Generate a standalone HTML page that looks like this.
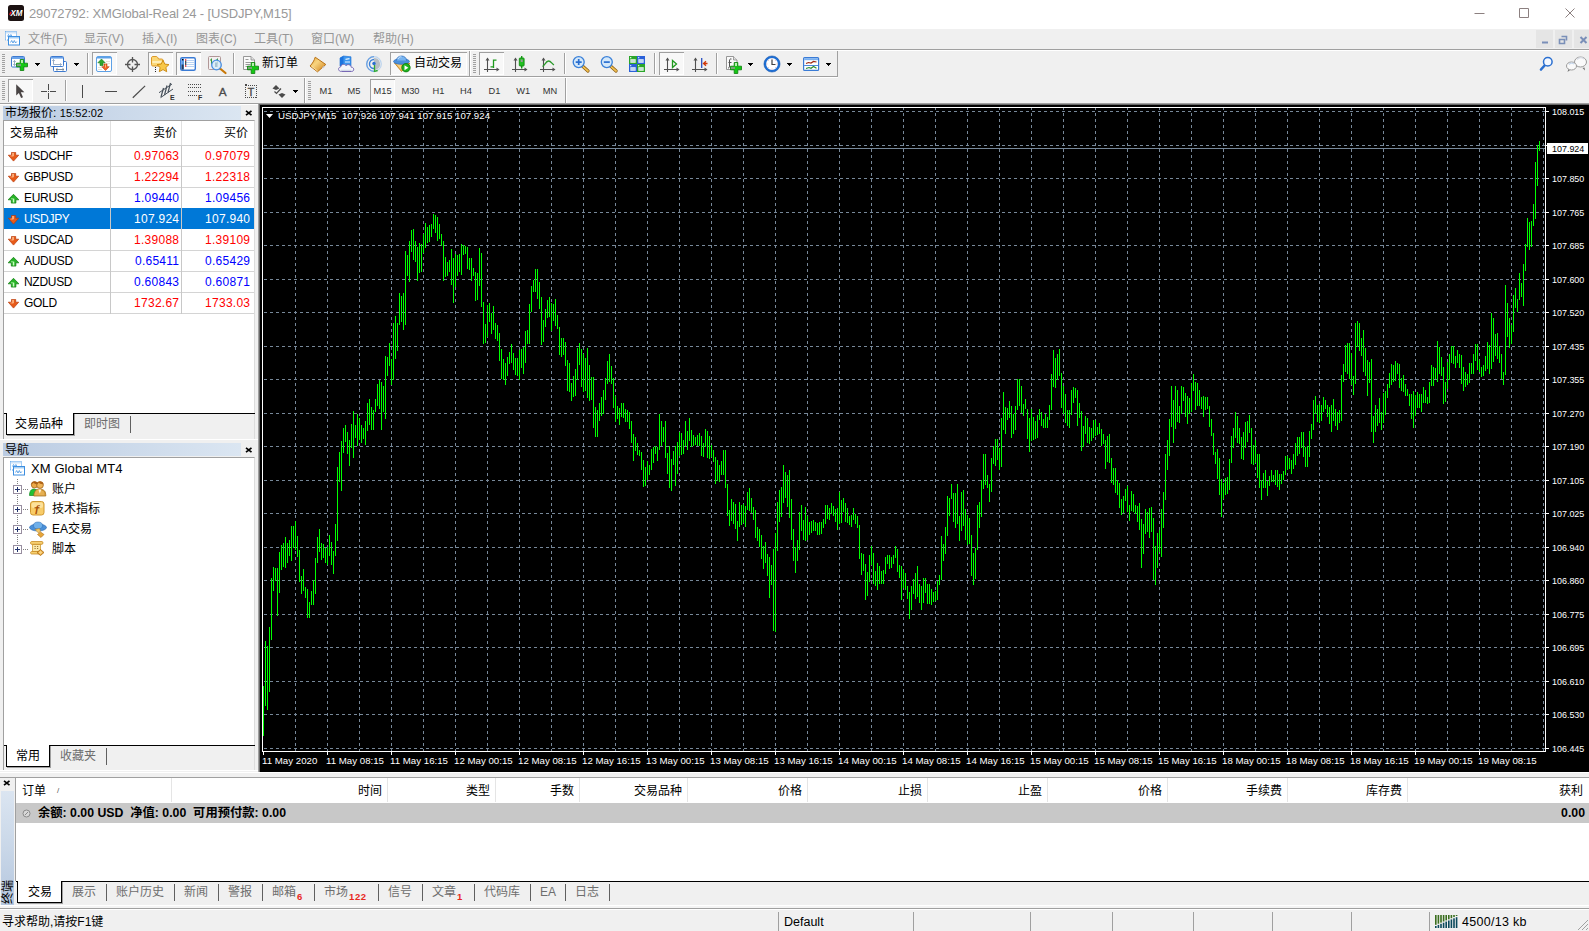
<!DOCTYPE html>
<html lang="zh-CN"><head><meta charset="utf-8"><title>29072792: XMGlobal-Real 24 - [USDJPY,M15]</title>
<style>

html,body{margin:0;padding:0}
body{width:1589px;height:931px;overflow:hidden;background:#f0f0f0;font-family:"Liberation Sans","Noto Sans CJK SC",sans-serif;font-size:12px;color:#000}
#app{position:relative;width:1589px;height:931px;overflow:hidden;background:#f0f0f0}
#app div,#app span,#app svg{position:absolute;box-sizing:border-box}
.t{white-space:pre;line-height:16px;height:16px}
.r{text-align:right}
.tb{background:#f0f0f0}
.pressed{background:#f7f7f7;border:1px solid #fff;border-top-color:#a0a0a0;border-left-color:#a0a0a0}
.vsep{width:2px;border-left:1px solid #a0a0a0;border-right:1px solid #fff}
.grip{width:3px;background:repeating-linear-gradient(to bottom,#a0a0a0 0,#a0a0a0 1px,transparent 1px,transparent 2px)}
.hdr{background:linear-gradient(to right,#bacbe2 0,#cbd9ea 50%,#dbe6f2 100%)}
.gl{background:#a0a0a0}
.red{color:#ff0000}.blue{color:#0000ff}.wh{color:#fff}
.mw .t{font-size:12px}
.tabtxt{color:#6d6d6d}

</style></head>
<body>
<div id="app">
<div style="left:0px;top:0px;width:1589px;height:29px;background:#fff"></div>
<svg style="left:8px;top:5px" width="16" height="16" viewBox="0 0 16 16" ><rect x="0" y="0" width="16" height="16" rx="2.500" fill="#1c1212"/><text x="8.400" y="11.100" font-family="Liberation Sans, sans-serif" font-size="8.600" font-weight="bold" font-style="italic" fill="#fff" text-anchor="middle" textLength="12" lengthAdjust="spacingAndGlyphs">XM</text><path d="M1.700 9.800l1.500-3" stroke="#f0141e" stroke-width="1.500"/></svg>
<span class="t " style="left:29px;top:5px;font-size:13px;letter-spacing:-.15px;color:#999;line-height:18px;height:18px">29072792: XMGlobal-Real 24 - [USDJPY,M15]</span>
<svg style="left:1469px;top:3px" width="115" height="22" viewBox="0 0 115 22" ><path d="M5.5 10.5h10M50.5 5.5h9v9h-9zM96.5 5.5l9 9M105.5 5.5l-9 9" stroke="#8c8080" stroke-width="1" fill="none"/></svg>
<div style="left:0px;top:29px;width:1589px;height:20px;background:#f0f0f0"></div>
<svg style="left:5px;top:31px" width="15" height="15" viewBox="0 0 15 15" ><rect x="0.500" y="0.500" width="11" height="8.500" fill="#fff" stroke="#4a9ae8" stroke-dasharray="1 1"/><rect x="1" y="1" width="10" height="1.500" fill="#cfe4f8"/><rect x="3.500" y="5.500" width="11" height="8.500" fill="#fff" stroke="#3c8ee0"/><rect x="4" y="6" width="10" height="1.500" fill="#a8d0f4"/><path d="M2.500 5.500l1-2 1.200 2 1.200-2 1.200 2" stroke="#4a9ae8" stroke-width=".8" fill="none"/><path d="M5.500 11.500l1.200-2 1.300 2.500 1.300-2.500 1.300 2.500 1.200-1.500" stroke="#3c8ee0" stroke-width=".8" fill="none"/></svg>
<span class="t " style="left:28px;top:31px;color:#969696;font-size:12px">文件(F)</span>
<span class="t " style="left:84px;top:31px;color:#969696;font-size:12px">显示(V)</span>
<span class="t " style="left:142px;top:31px;color:#969696;font-size:12px">插入(I)</span>
<span class="t " style="left:196px;top:31px;color:#969696;font-size:12px">图表(C)</span>
<span class="t " style="left:254px;top:31px;color:#969696;font-size:12px">工具(T)</span>
<span class="t " style="left:311px;top:31px;color:#969696;font-size:12px">窗口(W)</span>
<span class="t " style="left:373px;top:31px;color:#969696;font-size:12px">帮助(H)</span>
<div style="left:1536px;top:30px;width:17px;height:18px;background:#e5e5e5"></div>
<div style="left:1555px;top:30px;width:17px;height:18px;background:#e5e5e5"></div>
<div style="left:1574px;top:30px;width:15px;height:18px;background:#e5e5e5"></div>
<svg style="left:1536px;top:30px" width="53" height="18" viewBox="0 0 53 18" ><path d="M6 12.5h6" stroke="#7a8fb8" stroke-width="2" fill="none"/><path d="M25.5 6.5h5v4M23.5 9.5h5v4h-5z" stroke="#7a8fb8" stroke-width="1.6" fill="none"/><path d="M44.500 7l6 6M50.500 7l-6 6" stroke="#7a8fb8" stroke-width="2" fill="none"/></svg>
<div style="left:0px;top:49px;width:1589px;height:1px;background:#a0a0a0"></div>
<div style="left:0px;top:50px;width:1589px;height:1px;background:#fff"></div>
<div style="left:0px;top:103px;width:1589px;height:1px;background:#a0a0a0"></div>
<div style="left:0px;top:104px;width:258px;height:1px;background:#fff"></div>
<svg style="left:0;top:51px" width="840" height="27" viewBox="0 51 840 27" shape-rendering="crispEdges"><path d="M0 76.500H838" stroke="#a0a0a0"/><path d="M0 77.500H838" stroke="#fff"/><path d="M837.500 51V77" stroke="#a0a0a0"/><rect x="2" y="54" width="3" height="1" fill="#a0a0a0"/><rect x="2" y="56" width="3" height="1" fill="#a0a0a0"/><rect x="2" y="58" width="3" height="1" fill="#a0a0a0"/><rect x="2" y="60" width="3" height="1" fill="#a0a0a0"/><rect x="2" y="62" width="3" height="1" fill="#a0a0a0"/><rect x="2" y="64" width="3" height="1" fill="#a0a0a0"/><rect x="2" y="66" width="3" height="1" fill="#a0a0a0"/><rect x="2" y="68" width="3" height="1" fill="#a0a0a0"/><rect x="2" y="70" width="3" height="1" fill="#a0a0a0"/><rect x="2" y="72" width="3" height="1" fill="#a0a0a0"/><g shape-rendering="auto"><rect x="11.500" y="56.500" width="13" height="10.500" rx="1" fill="#fff" stroke="#3d7ad0"/><rect x="12" y="57" width="12" height="2" fill="#6aa3ea"/><path d="M14.500 60.500v5M13.300 62l1.200-1.500 1.200 1.500M13.300 64l1.200 1.500 1.200-1.500" stroke="#8fa5c0" stroke-width=".9" fill="none"/></g><g shape-rendering="auto"><path d="M20.2 59.5h3.600v3.700h3.700v3.600h-3.700v3.700h-3.600v-3.700h-3.700v-3.600h3.700z" fill="#14c814" stroke="#0b7d0b" stroke-width=".8"/><rect x="21" y="60" width="2" height="3" fill="#b8f0b0"/><rect x="17" y="64" width="4" height="2" fill="#7aa07a"/></g><rect x="35" y="63" width="5" height="1" fill="#000"/><rect x="36" y="64" width="3" height="1" fill="#000"/><rect x="37" y="65" width="1" height="1" fill="#000"/><g shape-rendering="auto"><rect x="53.500" y="61.500" width="13" height="10" rx="1" fill="#fff" stroke="#3d7ad0"/><rect x="50.500" y="56.500" width="13" height="10" rx="1" fill="#fff" stroke="#3d7ad0"/><rect x="51" y="57" width="12" height="1.600" fill="#6aa3ea"/><path d="M53.500 59.500v5M52.300 61l1.200-1.500 1.200 1.500M53.500 64.500h8M60 63.300l1.500 1.200-1.500 1.200" stroke="#8fa5c0" stroke-width=".9" fill="none"/><path d="M56 69.500h8M57.500 68.300l-1.500 1.200 1.500 1.200M62.500 68.300l1.500 1.200-1.500 1.200" stroke="#708090" stroke-width=".9" fill="none"/></g><rect x="74" y="63" width="5" height="1" fill="#000"/><rect x="75" y="64" width="3" height="1" fill="#000"/><rect x="76" y="65" width="1" height="1" fill="#000"/><path d="M87.5 53V74" stroke="#a0a0a0"/><path d="M88.5 53V74" stroke="#fff"/><rect x="92" y="52" width="25" height="23" fill="#f8f8f8"/><path d="M92.5 75V52.5H117" stroke="#a0a0a0" fill="none"/><path d="M93 74.5H116.5V53" stroke="#fff" fill="none"/><g shape-rendering="auto"><rect x="96.500" y="56.500" width="15" height="15" rx="1.500" fill="#fff" stroke="#5ea1e6"/><rect x="97" y="57" width="14" height="1.500" fill="#5ea1e6"/><path d="M106 61.500h4M106 63.500h4M98 67.500h4M98 69.500h4" stroke="#e8e4d8" stroke-width="1"/><path d="M101.500 59l3.700 3.800h-2.200v2.700h-3v-2.700h-2.200z" fill="#2fa82f" stroke="#1a7a1a" stroke-width=".6"/><path d="M105.500 70.500l3.700-3.800h-2.200v-2.700h-3v2.700h-2.200z" fill="#f06428" stroke="#c03c08" stroke-width=".6"/><rect x="105" y="64.500" width="1" height="3" fill="#f8c070"/></g><g shape-rendering="auto" stroke="#555" fill="none"><circle cx="132.500" cy="64.500" r="5" stroke-width="1.300"/><path d="M132.500 57v5.500M132.500 66.500V72M125 64.500h5.500M134.500 64.500H140" stroke-width="1.300"/></g><rect x="148" y="52" width="25" height="23" fill="#f8f8f8"/><path d="M148.5 75V52.5H173" stroke="#a0a0a0" fill="none"/><path d="M149 74.5H172.5V53" stroke="#fff" fill="none"/><g shape-rendering="auto"><path d="M151.500 58c0-1 .5-1.500 1.500-1.500h3c1 0 1.500.5 2 1.500l.5 1h3c1 0 1.500.5 1.500 1.500v4c0 1-.5 1.500-1.500 1.500h-8.500c-1 0-1.500-.5-1.500-1.500z" fill="#fbd878" stroke="#d89018" stroke-width=".9"/><path d="M152.300 61h9.500v2h-9.500z" fill="#fff3c8" opacity=".8"/><path d="M163 60.200l1.800 3.900 4.200.5-3.100 2.900.8 4.200-3.700-2.100-3.700 2.100.8-4.200-3.100-2.900 4.200-.5z" fill="#f8c848" stroke="#c8860c" stroke-width=".9"/><path d="M155.500 67v1M155.500 69v1M155.500 71v1" stroke="#222" stroke-width="1"/></g><rect x="176" y="52" width="25" height="23" fill="#f8f8f8"/><path d="M176.5 75V52.5H201" stroke="#a0a0a0" fill="none"/><path d="M177 74.5H200.5V53" stroke="#fff" fill="none"/><g shape-rendering="auto"><rect x="180.700" y="57.700" width="14.600" height="12.600" rx="1.500" fill="#fff" stroke="#3a7bd5" stroke-width="1.400"/><rect x="181.400" y="58.400" width="2.600" height="11.200" fill="#5b9be8"/><rect x="181.600" y="64.500" width="2" height="5" fill="#283c5a"/><path d="M185 60.500h9.500M185 62.500h9.500M185 64.500h9.500M185 66.500h9.500" stroke="#a8c8f0" stroke-width=".8"/><rect x="182" y="59" width="1.400" height="1.400" fill="#000"/><rect x="185" y="59.300" width="1.300" height="1.300" fill="#e00"/><rect x="185" y="61.300" width="1.300" height="1.300" fill="#000"/><rect x="185" y="63.300" width="1.300" height="1.300" fill="#000"/><rect x="185" y="65.300" width="1.300" height="1.300" fill="#e00"/></g><g shape-rendering="auto"><rect x="208.500" y="56.500" width="12" height="13" rx="1" fill="#f4f0f0" stroke="#a88c8c" stroke-width=".9"/><path d="M211.500 58.500v6M210 60h1.500M211.500 63h1.500M217.500 58.500v5M216 60h1.500" stroke="#3c9a3c" stroke-width="1"/><path d="M220 68.500l5.500 4.500" stroke="#c87808" stroke-width="2.200" stroke-linecap="round"/><circle cx="216.500" cy="65" r="4.800" fill="#d8ecfa" fill-opacity=".85" stroke="#4a90e2" stroke-width="1.300"/><rect x="215" y="62.500" width="2.500" height="4.500" fill="#9ab8c8" opacity=".8"/></g><path d="M233.5 53V74" stroke="#a0a0a0"/><path d="M234.5 53V74" stroke="#fff"/><g shape-rendering="auto"><path d="M243.500 56.500h7.500l3.500 3.500v9.500h-11z" fill="#fafafa" stroke="#8c8c8c" stroke-width=".9"/><path d="M251 56.500v3.500h3.500" fill="#e0e0e0" stroke="#8c8c8c" stroke-width=".8"/><path d="M245.500 59.500h3M245.500 62.500h6M245.500 64.500h5M245.500 66.500h3" stroke="#9a9a9a" stroke-width="1"/></g><g shape-rendering="auto"><path d="M251.2 62.5h3.600v3.700h3.700v3.600h-3.700v3.700h-3.600v-3.700h-3.700v-3.600h3.700z" fill="#14c814" stroke="#0b7d0b" stroke-width=".8"/><rect x="252" y="63" width="2" height="3" fill="#b8f0b0"/><rect x="248" y="67" width="4" height="2" fill="#7aa07a"/></g><g shape-rendering="auto"><defs><linearGradient id="gb" x1="0" y1="0" x2="1" y2="1"><stop offset="0" stop-color="#e8a838"/><stop offset=".4" stop-color="#f8d480"/><stop offset="1" stop-color="#cc7c14"/></linearGradient></defs><path d="M315.200 57.200L325.800 64.500L317.500 71.800L310 66c2.500-2.500 4.200-5.500 5.200-8.800z" fill="url(#gb)" stroke="#b87014" stroke-width="1"/><path d="M311.500 66.300l6 4.600" stroke="#fff0c0" stroke-width=".9" opacity=".8"/><path d="M324.500 66.200l-2 1.800" stroke="#c8c8d0" stroke-width="1.300"/></g><g shape-rendering="auto"><path d="M340 58l3.500-2 7.500 .8v9.200h-11z" fill="#3c96ee" stroke="#1a6cd0" stroke-width=".6"/><path d="M340 58l3.500-2v10h-3.500z" fill="#1c74de"/><path d="M345.500 59.300l4-.6M345 62h5" stroke="#e4f2ff" stroke-width="1.200"/><path d="M341.500 71.500c-3.500 0-4-4-.8-4.600 .3-2.800 4-3.400 5.300-1.200 1.500-1.900 5-1.200 5.200 1.500 3-.3 3.600 4.300 .3 4.300z" fill="#f4f6fa" stroke="#7868b4" stroke-width="1"/><path d="M341 70.300h10.500" stroke="#c8d0e0" stroke-width="1"/></g><g shape-rendering="auto" fill="none"><circle cx="374" cy="64" r="7.300" stroke="#bcd4ee" stroke-width="1.200"/><path d="M374 56.700a7.300 7.300 0 0 0 0 14.600" stroke="#6aa0e0" stroke-width="1.300"/><path d="M374 59.500a4.500 4.500 0 0 0 0 9" stroke="#3a80d8" stroke-width="1.400"/><path d="M374 58a6 6 0 0 1 3 11.200l-3 1.300z" fill="#b0b8c0" stroke="none" opacity=".9"/><circle cx="374" cy="63.500" r="1.700" fill="#2a6fd0" stroke="none"/><path d="M374.500 65v6.300l3.200-.8" stroke="#2faa2f" stroke-width="1.300"/></g><rect x="390" y="52" width="77" height="23" fill="#f8f8f8"/><path d="M390.5 75V52.5H467" stroke="#a0a0a0" fill="none"/><path d="M391 74.5H466.5V53" stroke="#fff" fill="none"/><g shape-rendering="auto"><path d="M394.500 63l7 8.500 8.500-8z" fill="#f0b450" stroke="#c07c14" stroke-width=".8"/><path d="M396 63.500l5.500 6.500-1-6.500z" fill="#f8d890" opacity=".8"/><ellipse cx="401.500" cy="61.500" rx="8" ry="2.800" fill="#4a90dc" stroke="#2868b8" stroke-width=".7"/><path d="M396.500 60.500c0-6 10-6 10 0" fill="#78b4f0" stroke="#2868b8" stroke-width=".7"/><path d="M398 59c1-2.500 3-2.500 3.500-2" stroke="#cfe6ff" stroke-width="1" fill="none"/><circle cx="406" cy="67.700" r="4.200" fill="#1eb41e" stroke="#0e7a0e" stroke-width=".8"/><path d="M404.500 65.200l3.800 2.500-3.800 2.500z" fill="#fff"/></g><path d="M469.5 51V76" stroke="#a0a0a0"/><path d="M470.5 51V76" stroke="#fff"/><rect x="473" y="54" width="3" height="1" fill="#a0a0a0"/><rect x="473" y="56" width="3" height="1" fill="#a0a0a0"/><rect x="473" y="58" width="3" height="1" fill="#a0a0a0"/><rect x="473" y="60" width="3" height="1" fill="#a0a0a0"/><rect x="473" y="62" width="3" height="1" fill="#a0a0a0"/><rect x="473" y="64" width="3" height="1" fill="#a0a0a0"/><rect x="473" y="66" width="3" height="1" fill="#a0a0a0"/><rect x="473" y="68" width="3" height="1" fill="#a0a0a0"/><rect x="473" y="70" width="3" height="1" fill="#a0a0a0"/><rect x="473" y="72" width="3" height="1" fill="#a0a0a0"/><rect x="479" y="52" width="25" height="23" fill="#f8f8f8"/><path d="M479.5 75V52.5H504" stroke="#a0a0a0" fill="none"/><path d="M480 74.5H503.5V53" stroke="#fff" fill="none"/><g shape-rendering="auto" stroke="#505050" stroke-width="1.100" fill="none"><path d="M487.5 58.500V72M484 69.500H498"/></g><path d="M485.5 60.500L487.5 57.500L489.5 60.500zM496.5 67.500L499.5 69.500L496.5 71.500z" fill="#505050" shape-rendering="auto"/><path d="M493.500 59.500v8.500M493.500 60.200h3M490.500 66.800h3" stroke="#1e9a1e" stroke-width="1.300" fill="none" shape-rendering="auto"/><g shape-rendering="auto" stroke="#505050" stroke-width="1.100" fill="none"><path d="M515.5 58.500V72M512 69.500H526"/></g><path d="M513.5 60.500L515.5 57.500L517.5 60.500zM524.5 67.500L527.5 69.500L524.5 71.500z" fill="#505050" shape-rendering="auto"/><g shape-rendering="auto"><path d="M521.700 56v12.500" stroke="#169a16" stroke-width="1.400"/><rect x="519.300" y="58" width="4.800" height="8" rx=".8" fill="#22c022" stroke="#0f8a0f" stroke-width=".9"/><rect x="520.700" y="59.500" width="2" height="2.500" fill="#9a9a9a"/></g><g shape-rendering="auto" stroke="#505050" stroke-width="1.100" fill="none"><path d="M543.5 58.500V72M540 69.500H554"/></g><path d="M541.5 60.500L543.5 57.500L545.5 60.500zM552.5 67.500L555.5 69.500L552.5 71.500z" fill="#505050" shape-rendering="auto"/><path d="M542.500 66.500c2-1 3.500-5.500 6-5.500s3.500 3 5.500 4" stroke="#2a9a2a" stroke-width="1.300" fill="none" shape-rendering="auto"/><path d="M564.5 53V74" stroke="#a0a0a0"/><path d="M565.5 53V74" stroke="#fff"/><g shape-rendering="auto"><path d="M582.7 66.3l5.300 4.700" stroke="#8a5a10" stroke-width="3.200" stroke-linecap="round"/><path d="M582.7 66.3l5.300 4.700" stroke="#f0c050" stroke-width="1.800" stroke-linecap="round"/><circle cx="578.7" cy="62.100" r="5.500" fill="#d4e8fa" stroke="#3a80d8" stroke-width="1.300"/><path d="M575.7 62.100h6M578.7 59.100v6" stroke="#2a6fd0" stroke-width="1.700"/></g><g shape-rendering="auto"><path d="M610.8 66.3l5.300 4.700" stroke="#8a5a10" stroke-width="3.200" stroke-linecap="round"/><path d="M610.8 66.3l5.300 4.700" stroke="#f0c050" stroke-width="1.800" stroke-linecap="round"/><circle cx="606.8" cy="62.100" r="5.500" fill="#d4e8fa" stroke="#3a80d8" stroke-width="1.300"/><path d="M603.8 62.100h6" stroke="#2a6fd0" stroke-width="1.700"/></g><g shape-rendering="auto"><rect x="629" y="56" width="8" height="8" fill="#2aa52a"/><rect x="637" y="56" width="8" height="8" fill="#2a60d8"/><rect x="629" y="64" width="8" height="8" fill="#2a60d8"/><rect x="637" y="64" width="8" height="8" fill="#2aa52a"/><rect x="630.300" y="59.200" width="5.400" height="3.600" fill="#e8f8e0"/><rect x="638.300" y="59.200" width="5.400" height="3.600" fill="#e0ecff"/><rect x="630.300" y="67.200" width="5.400" height="3.600" fill="#e0ecff"/><rect x="638.300" y="67.200" width="5.400" height="3.600" fill="#e8f8e0"/><path d="M630.300 61h5.400M638.300 61h5.400M630.300 69h5.400M638.300 69h5.400" stroke="#8cb8d8" stroke-width=".7"/><rect x="630" y="57" width="1.300" height="1.300" fill="#d8ffd0"/><rect x="638" y="57" width="1.300" height="1.300" fill="#c8dcff"/><rect x="630" y="65" width="1.300" height="1.300" fill="#c8dcff"/><rect x="638" y="65" width="1.300" height="1.300" fill="#d8ffd0"/></g><path d="M654.5 53V74" stroke="#a0a0a0"/><path d="M655.5 53V74" stroke="#fff"/><rect x="659" y="52" width="25" height="23" fill="#f8f8f8"/><path d="M659.5 75V52.5H684" stroke="#a0a0a0" fill="none"/><path d="M660 74.5H683.5V53" stroke="#fff" fill="none"/><g shape-rendering="auto" stroke="#505050" stroke-width="1.100" fill="none"><path d="M667.5 58.500V72M664 69.500H678"/></g><path d="M665.5 60.500L667.5 57.500L669.5 60.500zM676.5 67.500L679.5 69.500L676.5 71.500z" fill="#505050" shape-rendering="auto"/><path d="M672.500 60.500l4 3.500-4 3.500z" stroke="#1e9a1e" stroke-width="1.300" fill="none" shape-rendering="auto"/><g shape-rendering="auto" stroke="#505050" stroke-width="1.100" fill="none"><path d="M695.5 58.500V72M692 69.500H706"/></g><path d="M693.5 60.500L695.5 57.500L697.5 60.500zM704.5 67.500L707.5 69.500L704.5 71.500z" fill="#505050" shape-rendering="auto"/><g shape-rendering="auto"><path d="M701.700 58v10" stroke="#2a50c0" stroke-width="1.300"/><path d="M703.500 63.500h4M706 61.300l-2.500 2.200 2.500 2.200" stroke="#d03808" stroke-width="1.300" fill="none"/></g><path d="M716.5 53V74" stroke="#a0a0a0"/><path d="M717.5 53V74" stroke="#fff"/><g shape-rendering="auto"><path d="M726.500 56.500h7l3.500 3.500v9.500h-10.500z" fill="#fafafa" stroke="#8c8c8c" stroke-width=".9"/><path d="M733.500 56.500v3.500h3.500" fill="#e0e0e0" stroke="#8c8c8c" stroke-width=".8"/><path d="M731.500 59c-1.500-.5-2 .5-2 2v5c0 1.500-.5 2-1.500 2M728.500 62.500h3" stroke="#505050" stroke-width="1" fill="none"/></g><g shape-rendering="auto"><path d="M734.2 62.5h3.600v3.700h3.700v3.600h-3.700v3.700h-3.600v-3.700h-3.700v-3.600h3.700z" fill="#14c814" stroke="#0b7d0b" stroke-width=".8"/><rect x="735" y="63" width="2" height="3" fill="#b8f0b0"/><rect x="731" y="67" width="4" height="2" fill="#7aa07a"/></g><rect x="748" y="63" width="5" height="1" fill="#000"/><rect x="749" y="64" width="3" height="1" fill="#000"/><rect x="750" y="65" width="1" height="1" fill="#000"/><g shape-rendering="auto"><circle cx="772" cy="64" r="7" fill="#fff" stroke="#1e6fd4" stroke-width="2.200"/><circle cx="772" cy="64" r="8.100" fill="none" stroke="#0e4fa8" stroke-width=".5"/><path d="M772 59.500v5h3.500" stroke="#404040" stroke-width="1.200" fill="none"/><path d="M772 58.500v.800M772 68.700v.800M766.500 64h.800M776.700 64h.800M768.200 60.200l.5.500M775.800 60.200l-.5.500M768.200 67.800l.5-.5M775.800 67.800l-.5-.5" stroke="#d88080" stroke-width=".8"/></g><rect x="787" y="63" width="5" height="1" fill="#000"/><rect x="788" y="64" width="3" height="1" fill="#000"/><rect x="789" y="65" width="1" height="1" fill="#000"/><g shape-rendering="auto"><rect x="803.600" y="57.600" width="15" height="12.800" rx="1" fill="#fff" stroke="#3a7bd5" stroke-width="1.200"/><rect x="804.200" y="58.200" width="13.800" height="2" fill="#7ab0f0"/><path d="M804.200 65.500h13.800" stroke="#3a7bd5" stroke-width=".9"/><path d="M806 63.500l2.500-1 2.500.5 2.500-1.500 3 .5" stroke="#a02810" stroke-width="1.200" fill="none"/><path d="M806 68.500l3-1 2 .8 2.500-1.800 3 1.800" stroke="#2a8a2a" stroke-width="1.100" fill="none"/></g><rect x="826" y="63" width="5" height="1" fill="#000"/><rect x="827" y="64" width="3" height="1" fill="#000"/><rect x="828" y="65" width="1" height="1" fill="#000"/></svg><span class="t " style="left:262px;top:55px;font-size:12px">新订单</span><span class="t " style="left:414px;top:55px;font-size:12px">自动交易</span>
<svg style="left:1536px;top:53px" width="53" height="22" viewBox="0 0 53 22" ><path d="M5 16.500l4.500-5" stroke="#2a6fd0" stroke-width="2.600" stroke-linecap="round"/><circle cx="11.800" cy="8.700" r="4.300" fill="#f4f8ff" stroke="#2a6fd0" stroke-width="1.500"/><path d="M46.500 15l2.500 2.500-.5-3z" fill="#707070"/><ellipse cx="44.500" cy="9" rx="6" ry="5" fill="#fafafa" stroke="#9a9a9a" stroke-width="1"/><path d="M41 6.500c2-2 5-2 7-.5" stroke="#d8dce4" stroke-width="1.200" fill="none"/><path d="M32.500 16l-1 3 3-2.200z" fill="#707070"/><ellipse cx="35.500" cy="13" rx="5" ry="4" fill="#fafafa" stroke="#9a9a9a" stroke-width="1"/><path d="M33 11.500c1.500-1.500 3.500-1.500 5-.5" stroke="#c8d8ec" stroke-width="1.200" fill="none"/></svg>
<svg style="left:0;top:78px" width="570" height="25" viewBox="0 78 570 25" shape-rendering="crispEdges"><rect x="2" y="81" width="3" height="1" fill="#a0a0a0"/><rect x="2" y="83" width="3" height="1" fill="#a0a0a0"/><rect x="2" y="85" width="3" height="1" fill="#a0a0a0"/><rect x="2" y="87" width="3" height="1" fill="#a0a0a0"/><rect x="2" y="89" width="3" height="1" fill="#a0a0a0"/><rect x="2" y="91" width="3" height="1" fill="#a0a0a0"/><rect x="2" y="93" width="3" height="1" fill="#a0a0a0"/><rect x="2" y="95" width="3" height="1" fill="#a0a0a0"/><rect x="2" y="97" width="3" height="1" fill="#a0a0a0"/><rect x="2" y="99" width="3" height="1" fill="#a0a0a0"/><rect x="8" y="79" width="25" height="23" fill="#f8f8f8"/><path d="M8.5 102V79.5H33" stroke="#a0a0a0" fill="none"/><path d="M9 101.5H32.5V80" stroke="#fff" fill="none"/><path d="M16.200 84.200v11.300l2.700-2.500 2.200 5 1.900-.8-2.200-4.900h3.600z" fill="#4a4545" shape-rendering="auto"/><path d="M48.500 84v6M48.500 93v6M41 91.500h6M50 91.500h6" stroke="#4a4a4a" fill="none"/><rect x="48" y="91" width="1" height="1" fill="#4a4a4a"/><path d="M65.5 80V101" stroke="#a0a0a0"/><path d="M66.5 80V101" stroke="#fff"/><path d="M82.500 85v13M105 91.500h12" stroke="#4a4a4a" fill="none"/><path d="M132.800 97.700L145.100 85.900" stroke="#4a4a4a" stroke-width="1.200" shape-rendering="auto"/><g shape-rendering="auto" stroke="#46505a" fill="none"><path d="M159 92.700l13-8.700M160.500 97.700l12.500-8.700" stroke-width="1"/><path d="M161 97l2.500-9M164.500 95l2.500-9.500M168 92.500l2.500-9.500" stroke-width="1.200"/></g><text x="170" y="100" font-family="Liberation Sans, sans-serif" font-size="7" font-weight="bold" fill="#333" shape-rendering="auto">E</text><path d="M188 84.5h13" stroke="#4a4a4a" stroke-dasharray="1 1" fill="none"/><path d="M188 87.5h13" stroke="#4a4a4a" stroke-dasharray="1 1" fill="none"/><path d="M188 91.5h13" stroke="#4a4a4a" stroke-dasharray="1 1" fill="none"/><path d="M188 95.500h9" stroke="#4a4a4a" stroke-dasharray="1 1" fill="none"/><text x="198" y="100" font-family="Liberation Sans, sans-serif" font-size="7" font-weight="bold" fill="#333" shape-rendering="auto">F</text><text x="222.700" y="95.700" font-family="Liberation Sans, sans-serif" font-size="11.800" fill="#4a4a4a" text-anchor="middle" stroke="#4a4a4a" stroke-width=".3" shape-rendering="auto">A</text><rect x="245.500" y="85.500" width="11" height="12" stroke="#4a4a4a" stroke-dasharray="1 1" fill="none"/><rect x="245" y="84" width="2" height="2" fill="#4a4a4a"/><text x="251" y="95.500" font-family="Liberation Sans, sans-serif" font-size="10.500" fill="#4a4a4a" text-anchor="middle" stroke="#4a4a4a" stroke-width=".4" shape-rendering="auto">T</text><g shape-rendering="auto" fill="#4a4a4a"><path d="M272.500 88.500l3.500-3.500 3.500 3.500-3.500 1.500z"/><path d="M278.500 94.500l3.500 3.500 3.500-3.500-3.500-1.500z"/><path d="M274.500 91.500l2 2 4.500-5" stroke="#4a4a4a" stroke-width="1.200" fill="none"/></g><rect x="293" y="90" width="5" height="1" fill="#000"/><rect x="294" y="91" width="3" height="1" fill="#000"/><rect x="295" y="92" width="1" height="1" fill="#000"/><path d="M304.500 78V103" stroke="#a0a0a0"/><path d="M305.500 78V103" stroke="#fff"/><rect x="308" y="81" width="3" height="1" fill="#a0a0a0"/><rect x="308" y="83" width="3" height="1" fill="#a0a0a0"/><rect x="308" y="85" width="3" height="1" fill="#a0a0a0"/><rect x="308" y="87" width="3" height="1" fill="#a0a0a0"/><rect x="308" y="89" width="3" height="1" fill="#a0a0a0"/><rect x="308" y="91" width="3" height="1" fill="#a0a0a0"/><rect x="308" y="93" width="3" height="1" fill="#a0a0a0"/><rect x="308" y="95" width="3" height="1" fill="#a0a0a0"/><rect x="308" y="97" width="3" height="1" fill="#a0a0a0"/><rect x="308" y="99" width="3" height="1" fill="#a0a0a0"/><rect x="370" y="79" width="25" height="23" fill="#f8f8f8"/><path d="M370.5 102V79.5H395" stroke="#a0a0a0" fill="none"/><path d="M371 101.5H394.5V80" stroke="#fff" fill="none"/><path d="M565.500 78V103" stroke="#a0a0a0"/><path d="M566.500 78V103" stroke="#fff"/></svg><span class="t" style="left:305.9px;top:83px;width:40px;text-align:center;font-size:9.300px;color:#333">M1</span><span class="t" style="left:334.0px;top:83px;width:40px;text-align:center;font-size:9.300px;color:#333">M5</span><span class="t" style="left:362.6px;top:83px;width:40px;text-align:center;font-size:9.300px;color:#333">M15</span><span class="t" style="left:390.5px;top:83px;width:40px;text-align:center;font-size:9.300px;color:#333">M30</span><span class="t" style="left:418.5px;top:83px;width:40px;text-align:center;font-size:9.300px;color:#333">H1</span><span class="t" style="left:446.0px;top:83px;width:40px;text-align:center;font-size:9.300px;color:#333">H4</span><span class="t" style="left:474.4px;top:83px;width:40px;text-align:center;font-size:9.300px;color:#333">D1</span><span class="t" style="left:503.2px;top:83px;width:40px;text-align:center;font-size:9.300px;color:#333">W1</span><span class="t" style="left:530.0px;top:83px;width:40px;text-align:center;font-size:9.300px;color:#333">MN</span>
<div class="hdr" style="left:3px;top:106px;width:238px;height:14px;"></div>
<span class="t " style="left:5px;top:105px;font-size:12px">市场报价: <span style="position:static;font-size:11px;letter-spacing:.1px">15:52:02</span></span>
<svg style="left:245px;top:109px" width="8" height="8" viewBox="0 0 8 8" ><path d="M1 1.800l5.500 4.400M6.500 1.800l-5.500 4.400" stroke="#000" stroke-width="1.700" fill="none"/></svg>
<div style="left:3px;top:120px;width:252px;height:293px;background:#fff;border:1px solid #a0a0a0;border-bottom:none;border-right-color:#dcdcdc"></div>
<span class="t " style="left:10px;top:125px;font-size:12px">交易品种</span>
<span class="t r " style="right:1412px;top:125px;font-size:12px">卖价</span>
<span class="t r " style="right:1341px;top:125px;font-size:12px">买价</span>
<div style="left:4px;top:145px;width:250px;height:1px;background:#d0d0d0"></div>
<div style="left:110px;top:121px;width:1px;height:24px;background:#e0e0e0"></div>
<div style="left:181px;top:121px;width:1px;height:24px;background:#e0e0e0"></div>
<div style="left:4px;top:166px;width:250px;height:1px;background:#d4d4d4"></div>
<svg style="left:8px;top:152px" width="11" height="10" viewBox="0 0 11 10" ><path d="M3.500 0.400h4.200v2.800h3l-5.200 5.900-5.200-5.900h3.200z" fill="#e85a18" stroke="#b83a08" stroke-width=".7"/><path d="M4.300 1h1.500v3.200h-1.500z" fill="#ffc090"/><path d="M2.500 4h2.500" stroke="#ffb080" stroke-width=".8"/></svg>
<span class="t " style="left:24px;top:148px;letter-spacing:-.3px">USDCHF</span>
<span class="t r red" style="right:1410px;top:148px;letter-spacing:.25px;margin-right:-.25px">0.97063</span>
<span class="t r red" style="right:1339px;top:148px;letter-spacing:.25px;margin-right:-.25px">0.97079</span>
<div style="left:4px;top:187px;width:250px;height:1px;background:#d4d4d4"></div>
<svg style="left:8px;top:173px" width="11" height="10" viewBox="0 0 11 10" ><path d="M3.500 0.400h4.200v2.800h3l-5.200 5.900-5.200-5.900h3.200z" fill="#e85a18" stroke="#b83a08" stroke-width=".7"/><path d="M4.300 1h1.500v3.200h-1.500z" fill="#ffc090"/><path d="M2.500 4h2.500" stroke="#ffb080" stroke-width=".8"/></svg>
<span class="t " style="left:24px;top:169px;letter-spacing:-.3px">GBPUSD</span>
<span class="t r red" style="right:1410px;top:169px;letter-spacing:.25px;margin-right:-.25px">1.22294</span>
<span class="t r red" style="right:1339px;top:169px;letter-spacing:.25px;margin-right:-.25px">1.22318</span>
<div style="left:4px;top:208px;width:250px;height:1px;background:#d4d4d4"></div>
<svg style="left:8px;top:194px" width="11" height="10" viewBox="0 0 11 10" ><path d="M3.300 9.100h4.600v-3.300h3l-5.400-5.500-5.400 5.500h3.200z" fill="#28b428" stroke="#107a10" stroke-width=".7"/><path d="M4.800 8.500h1.500v-3.800h-1.500z" fill="#c8ffc0"/><path d="M3 4.800h2.500" stroke="#b0f0a8" stroke-width=".8"/></svg>
<span class="t " style="left:24px;top:190px;letter-spacing:-.3px">EURUSD</span>
<span class="t r blue" style="right:1410px;top:190px;letter-spacing:.25px;margin-right:-.25px">1.09440</span>
<span class="t r blue" style="right:1339px;top:190px;letter-spacing:.25px;margin-right:-.25px">1.09456</span>
<div style="left:4px;top:208px;width:250px;height:21px;background:#0078d7"></div>
<svg style="left:8px;top:215px" width="11" height="10" viewBox="0 0 11 10" ><path d="M3.500 0.400h4.200v2.800h3l-5.200 5.900-5.200-5.900h3.200z" fill="#e85a18" stroke="#b83a08" stroke-width=".7"/><path d="M4.300 1h1.500v3.200h-1.500z" fill="#ffc090"/><path d="M2.500 4h2.500" stroke="#ffb080" stroke-width=".8"/></svg>
<span class="t wh" style="left:24px;top:211px;letter-spacing:-.3px">USDJPY</span>
<span class="t r wh" style="right:1410px;top:211px;letter-spacing:.25px;margin-right:-.25px">107.924</span>
<span class="t r wh" style="right:1339px;top:211px;letter-spacing:.25px;margin-right:-.25px">107.940</span>
<div style="left:4px;top:250px;width:250px;height:1px;background:#d4d4d4"></div>
<svg style="left:8px;top:236px" width="11" height="10" viewBox="0 0 11 10" ><path d="M3.500 0.400h4.200v2.800h3l-5.200 5.900-5.200-5.900h3.200z" fill="#e85a18" stroke="#b83a08" stroke-width=".7"/><path d="M4.300 1h1.500v3.200h-1.500z" fill="#ffc090"/><path d="M2.500 4h2.500" stroke="#ffb080" stroke-width=".8"/></svg>
<span class="t " style="left:24px;top:232px;letter-spacing:-.3px">USDCAD</span>
<span class="t r red" style="right:1410px;top:232px;letter-spacing:.25px;margin-right:-.25px">1.39088</span>
<span class="t r red" style="right:1339px;top:232px;letter-spacing:.25px;margin-right:-.25px">1.39109</span>
<div style="left:4px;top:271px;width:250px;height:1px;background:#d4d4d4"></div>
<svg style="left:8px;top:257px" width="11" height="10" viewBox="0 0 11 10" ><path d="M3.300 9.100h4.600v-3.300h3l-5.400-5.500-5.400 5.500h3.200z" fill="#28b428" stroke="#107a10" stroke-width=".7"/><path d="M4.800 8.500h1.500v-3.800h-1.500z" fill="#c8ffc0"/><path d="M3 4.800h2.500" stroke="#b0f0a8" stroke-width=".8"/></svg>
<span class="t " style="left:24px;top:253px;letter-spacing:-.3px">AUDUSD</span>
<span class="t r blue" style="right:1410px;top:253px;letter-spacing:.25px;margin-right:-.25px">0.65411</span>
<span class="t r blue" style="right:1339px;top:253px;letter-spacing:.25px;margin-right:-.25px">0.65429</span>
<div style="left:4px;top:292px;width:250px;height:1px;background:#d4d4d4"></div>
<svg style="left:8px;top:278px" width="11" height="10" viewBox="0 0 11 10" ><path d="M3.300 9.100h4.600v-3.300h3l-5.400-5.500-5.400 5.500h3.200z" fill="#28b428" stroke="#107a10" stroke-width=".7"/><path d="M4.800 8.500h1.500v-3.800h-1.500z" fill="#c8ffc0"/><path d="M3 4.800h2.500" stroke="#b0f0a8" stroke-width=".8"/></svg>
<span class="t " style="left:24px;top:274px;letter-spacing:-.3px">NZDUSD</span>
<span class="t r blue" style="right:1410px;top:274px;letter-spacing:.25px;margin-right:-.25px">0.60843</span>
<span class="t r blue" style="right:1339px;top:274px;letter-spacing:.25px;margin-right:-.25px">0.60871</span>
<div style="left:4px;top:313px;width:250px;height:1px;background:#d4d4d4"></div>
<svg style="left:8px;top:299px" width="11" height="10" viewBox="0 0 11 10" ><path d="M3.500 0.400h4.200v2.800h3l-5.200 5.900-5.200-5.900h3.200z" fill="#e85a18" stroke="#b83a08" stroke-width=".7"/><path d="M4.300 1h1.500v3.200h-1.500z" fill="#ffc090"/><path d="M2.500 4h2.500" stroke="#ffb080" stroke-width=".8"/></svg>
<span class="t " style="left:24px;top:295px;letter-spacing:-.3px">GOLD</span>
<span class="t r red" style="right:1410px;top:295px;letter-spacing:.25px;margin-right:-.25px">1732.67</span>
<span class="t r red" style="right:1339px;top:295px;letter-spacing:.25px;margin-right:-.25px">1733.03</span>
<div style="left:110px;top:146px;width:1px;height:168px;background:#c8c8c8"></div>
<div style="left:181px;top:146px;width:1px;height:168px;background:#c8c8c8"></div>
<div style="left:3px;top:413px;width:252px;height:26px;background:#f0f0f0;border-left:1px solid #a0a0a0;border-right:1px solid #dcdcdc"></div>
<div style="left:73px;top:413px;width:182px;height:1px;background:#000"></div>
<div style="left:4px;top:413px;width:3px;height:1px;background:#000"></div>
<div style="left:6px;top:413px;width:68px;height:22px;background:#fff;border:1px solid #000;border-top:none;box-shadow:1px 1px 0 #a0a0a0"></div>
<span class="t " style="left:15px;top:416px;font-size:12px">交易品种</span>
<span class="t tabtxt" style="left:84px;top:416px;font-size:12px">即时图</span>
<div style="left:130px;top:416px;width:1px;height:17px;background:#606060"></div>
<div style="left:0px;top:439px;width:258px;height:1px;background:#fff"></div>
<div class="hdr" style="left:3px;top:443px;width:238px;height:13px;"></div>
<span class="t " style="left:5px;top:442px;font-size:12px">导航</span>
<svg style="left:245px;top:446px" width="8" height="8" viewBox="0 0 8 8" ><path d="M1 1.800l5.500 4.400M6.500 1.800l-5.500 4.400" stroke="#000" stroke-width="1.700" fill="none"/></svg>
<div style="left:3px;top:457px;width:252px;height:288px;background:#fff;border:1px solid #a0a0a0;border-bottom:none;border-right-color:#dcdcdc"></div>
<svg style="left:10px;top:461px" width="15" height="15" viewBox="0 0 15 15" ><rect x="0.500" y="0.500" width="11" height="8.500" fill="#fff" stroke="#4a9ae8" stroke-dasharray="1 1"/><rect x="1" y="1" width="10" height="1.500" fill="#cfe4f8"/><rect x="3.500" y="5.500" width="11" height="8.500" fill="#fff" stroke="#3c8ee0"/><rect x="4" y="6" width="10" height="1.500" fill="#a8d0f4"/><path d="M2.500 5.500l1-2 1.200 2 1.200-2 1.200 2" stroke="#4a9ae8" stroke-width=".8" fill="none"/><path d="M5.500 11.500l1.200-2 1.300 2.500 1.300-2.500 1.300 2.500 1.200-1.500" stroke="#3c8ee0" stroke-width=".8" fill="none"/></svg>
<span class="t " style="left:31px;top:461px;font-size:13px;letter-spacing:.1px">XM Global MT4</span>
<div style="left:17px;top:479px;width:1px;height:70px;background:repeating-linear-gradient(to bottom,#808080 0,#808080 1px,transparent 1px,transparent 2px)"></div>
<div style="left:13px;top:485px;width:9px;height:9px;background:#fff;border:1px solid #988ea0"></div>
<svg style="left:13px;top:485px" width="9" height="9" viewBox="0 0 9 9" ><path d="M2 4.500h5M4.500 2v5" stroke="#22346e" stroke-width="1" fill="none" shape-rendering="crispEdges"/></svg>
<div style="left:23px;top:489px;width:5px;height:1px;background:repeating-linear-gradient(to right,#808080 0,#808080 1px,transparent 1px,transparent 2px)"></div>
<svg style="left:29px;top:480px" width="18" height="17" viewBox="0 0 18 17" ><path d="M0.500 15.500c0-4 1.500-6.500 4.500-6.500l3 1v5.500z" fill="#22c234" stroke="#128a22" stroke-width=".7"/>
<circle cx="5.500" cy="4.800" r="3.200" fill="#eaa848" stroke="#9a5a14" stroke-width=".7"/><path d="M2.300 4.500c0-4 6.400-4 6.400-.5c-2 .3-4-.8-4.600-1.600c-.3 1-1 1.800-1.800 2.100z" fill="#a85c14"/>
<path d="M4.800 16c0-4.500 2-7 6-7s6 2.500 6 7z" fill="#e6b052" stroke="#9a6414" stroke-width=".7"/><path d="M9.300 9.500l1.500 4 1.500-4z" fill="#fff6e0"/><path d="M12.500 10l3.500 1.500v4" stroke="#c08828" stroke-width=".8" fill="none"/>
<circle cx="11" cy="5" r="3.400" fill="#f0b458" stroke="#9a5a14" stroke-width=".7"/><path d="M7.600 4.700c0-4.300 6.800-4.300 6.800-.5c-2.200.3-4.200-.8-4.900-1.700c-.3 1.100-1 2-1.900 2.200z" fill="#b06418"/></svg>
<span class="t " style="left:52px;top:481px;font-size:12px">账户</span>
<div style="left:13px;top:505px;width:9px;height:9px;background:#fff;border:1px solid #988ea0"></div>
<svg style="left:13px;top:505px" width="9" height="9" viewBox="0 0 9 9" ><path d="M2 4.500h5M4.500 2v5" stroke="#22346e" stroke-width="1" fill="none" shape-rendering="crispEdges"/></svg>
<div style="left:23px;top:509px;width:5px;height:1px;background:repeating-linear-gradient(to right,#808080 0,#808080 1px,transparent 1px,transparent 2px)"></div>
<svg style="left:30px;top:501px" width="15" height="15" viewBox="0 0 15 15" ><rect x="0.500" y="0.500" width="13.500" height="13.500" rx="2.500" fill="#f8cc68" stroke="#d09830" stroke-width="1"/>
<rect x="1.500" y="1.500" width="11.500" height="5.500" rx="2" fill="#fce6a8" opacity=".8"/>
<text x="7.200" y="11" font-family="Liberation Serif, serif" font-style="italic" font-weight="bold" font-size="11" fill="#a8500a" text-anchor="middle">f</text><path d="M4.500 6.800h5" stroke="#a8500a" stroke-width="1.100"/></svg>
<span class="t " style="left:52px;top:501px;font-size:12px">技术指标</span>
<div style="left:13px;top:525px;width:9px;height:9px;background:#fff;border:1px solid #988ea0"></div>
<svg style="left:13px;top:525px" width="9" height="9" viewBox="0 0 9 9" ><path d="M2 4.500h5M4.500 2v5" stroke="#22346e" stroke-width="1" fill="none" shape-rendering="crispEdges"/></svg>
<div style="left:23px;top:529px;width:5px;height:1px;background:repeating-linear-gradient(to right,#808080 0,#808080 1px,transparent 1px,transparent 2px)"></div>
<svg style="left:29px;top:521px" width="19" height="17" viewBox="0 0 19 17" ><ellipse cx="9" cy="6.500" rx="8.500" ry="3.500" fill="#4a90d9" stroke="#2a68b0" stroke-width=".6"/>
<ellipse cx="9" cy="4.500" rx="4.500" ry="3.500" fill="#6fb0ea" stroke="#2a68b0" stroke-width=".5"/>
<path d="M6 8.500l3.500 3.500 2-2-1-2.500z" fill="#f2c86a" stroke="#b07a1a" stroke-width=".5"/>
<path d="M11.500 11l3.500 2.500-3 3-3.500-3z" fill="#e8a63a" stroke="#a86a10" stroke-width=".6"/></svg>
<span class="t " style="left:52px;top:521px;font-size:12px">EA交易</span>
<div style="left:13px;top:545px;width:9px;height:9px;background:#fff;border:1px solid #988ea0"></div>
<svg style="left:13px;top:545px" width="9" height="9" viewBox="0 0 9 9" ><path d="M2 4.500h5M4.500 2v5" stroke="#22346e" stroke-width="1" fill="none" shape-rendering="crispEdges"/></svg>
<div style="left:23px;top:549px;width:5px;height:1px;background:repeating-linear-gradient(to right,#808080 0,#808080 1px,transparent 1px,transparent 2px)"></div>
<svg style="left:30px;top:541px" width="16" height="16" viewBox="0 0 16 16" ><path d="M2.500 3.500h8v7h-8z" fill="#fbe7a8" stroke="#d09a30" stroke-width=".8"/>
<path d="M1.500 0.500h10.500c1.300 0 1.300 2.800 0 2.800h-10.500c-1.300 0-1.300-2.800 0-2.800z" fill="#f6cf70" stroke="#c88c24" stroke-width=".8"/>
<path d="M4.500 5.500h1.200M7 5.500h1.200M4.500 7.500h1.200M7 7.500h1.200" stroke="#9a7a3a" stroke-width="1"/>
<path d="M1.500 10.500h9.500c1.200 0 1.200 2.500 0 2.500h-9.500c-1.200 0-1.200-2.500 0-2.500z" fill="#f6cf70" stroke="#c88c24" stroke-width=".8"/>
<path d="M10.500 8.500l3.500 3-3.500 3-3.500-3z" fill="#eaa838" stroke="#a86a10" stroke-width=".8"/><path d="M10.500 9.800l2 1.700-2 1.700-2-1.700z" fill="#f8d488"/></svg>
<span class="t " style="left:52px;top:541px;font-size:12px">脚本</span>
<div style="left:3px;top:745px;width:252px;height:25px;background:#f0f0f0;border-left:1px solid #a0a0a0;border-right:1px solid #dcdcdc"></div>
<div style="left:0px;top:770px;width:258px;height:1px;background:#fff"></div>
<div style="left:49px;top:745px;width:206px;height:1px;background:#000"></div>
<div style="left:4px;top:745px;width:3px;height:1px;background:#000"></div>
<div style="left:6px;top:745px;width:44px;height:22px;background:#fff;border:1px solid #000;border-top:none;box-shadow:1px 1px 0 #a0a0a0"></div>
<span class="t " style="left:16px;top:748px;font-size:12px">常用</span>
<span class="t tabtxt" style="left:60px;top:748px;font-size:12px">收藏夹</span>
<div style="left:106px;top:748px;width:1px;height:17px;background:#606060"></div>
<div style="left:258px;top:104px;width:1px;height:668px;background:#a0a0a0"></div>
<div style="left:259px;top:104px;width:1px;height:668px;background:#696969"></div>
<div style="left:259px;top:104px;width:1330px;height:1px;background:#696969"></div>
<svg class="chart" width="1329" height="667" viewBox="260 105 1329 667" shape-rendering="crispEdges" style="position:absolute;left:260px;top:105px">
<rect x="260" y="105" width="1329" height="667" fill="#000"/>
<path d="M295.5 108V751M327.5 108V751M359.5 108V751M391.5 108V751M423.5 108V751M455.5 108V751M487.5 108V751M519.5 108V751M551.5 108V751M583.5 108V751M615.5 108V751M647.5 108V751M679.5 108V751M711.5 108V751M743.5 108V751M775.5 108V751M807.5 108V751M839.5 108V751M871.5 108V751M903.5 108V751M935.5 108V751M967.5 108V751M999.5 108V751M1031.5 108V751M1063.5 108V751M1095.5 108V751M1127.5 108V751M1159.5 108V751M1191.5 108V751M1223.5 108V751M1255.5 108V751M1287.5 108V751M1319.5 108V751M1351.5 108V751M1383.5 108V751M1415.5 108V751M1447.5 108V751M1479.5 108V751M1511.5 108V751M1543.5 108V751" stroke="#778899" stroke-width="1" stroke-dasharray="3 3" stroke-dashoffset="1" fill="none"/>
<path d="M264 111.5H1545M264 145.5H1545M264 178.5H1545M264 212.5H1545M264 245.5H1545M264 279.5H1545M264 312.5H1545M264 346.5H1545M264 379.5H1545M264 413.5H1545M264 446.5H1545M264 480.5H1545M264 513.5H1545M264 547.5H1545M264 580.5H1545M264 614.5H1545M264 647.5H1545M264 681.5H1545M264 714.5H1545M264 748.5H1545" stroke="#778899" stroke-width="1" stroke-dasharray="3 3" fill="none"/>
<path d="M263 148.5H1546" stroke="#778899" stroke-width="1" fill="none"/>
<path d="M263.5 686V736M265.5 641V706M267.5 646V710M269.5 627V692M271.5 578V640M273.5 567V591M275.5 568V581M277.5 568V616M279.5 552V593M281.5 545V570M283.5 543V567M285.5 537V568M287.5 543V563M289.5 540V556M291.5 526V561M293.5 526V548M295.5 521V550M297.5 536V557M299.5 550V582M301.5 576V594M303.5 569V591M305.5 587V598M307.5 589V618M309.5 602V618M311.5 591V605M313.5 580V605M315.5 558V594M317.5 537V563M319.5 529V552M321.5 543V560M323.5 544V558M325.5 548V563M327.5 547V565M329.5 535V556M331.5 542V565M333.5 551V574M335.5 524V556M337.5 467V541M339.5 452V482M341.5 441V491M343.5 428V453M345.5 425V442M347.5 432V454M349.5 440V466M351.5 424V448M353.5 411V458M355.5 425V438M357.5 414V446M359.5 418V440M361.5 425V443M363.5 428V439M365.5 421V445M367.5 403V431M369.5 399V425M371.5 407V430M373.5 410V430M375.5 399V412M377.5 384V406M379.5 380V409M381.5 382V430M383.5 386V412M385.5 356V419M387.5 357V376M389.5 343V366M391.5 359V385M393.5 323V380M395.5 316V359M397.5 323V351M399.5 293V325M401.5 296V322M403.5 293V330M405.5 251V325M407.5 255V276M409.5 241V282M411.5 230V252M413.5 229V260M415.5 241V262M417.5 247V281M419.5 243V273M421.5 244V272M423.5 234V253M425.5 223V248M427.5 227V243M429.5 225V242M431.5 224V237M433.5 214V229M435.5 215V233M437.5 217V241M439.5 224V239M441.5 234V246M443.5 241V281M445.5 257V277M447.5 262V276M449.5 260V272M451.5 249V285M453.5 258V303M455.5 254V287M457.5 255V276M459.5 254V272M461.5 244V275M463.5 245V255M465.5 246V254M467.5 247V269M469.5 258V270M471.5 258V281M473.5 268V276M475.5 272V301M477.5 273V300M479.5 248V286M481.5 253V307M483.5 302V344M485.5 324V343M487.5 305V337M489.5 303V322M491.5 313V334M493.5 306V330M495.5 323V339M497.5 325V341M499.5 333V361M501.5 349V379M503.5 359V380M505.5 363V385M507.5 357V376M509.5 352V364M511.5 344V363M513.5 353V370M515.5 358V375M517.5 358V376M519.5 350V380M521.5 349V368M523.5 347V374M525.5 331V363M527.5 330V344M529.5 304V344M531.5 286V312M533.5 280V292M535.5 269V292M537.5 269V299M539.5 282V309M541.5 297V345M543.5 320V342M545.5 309V327M547.5 300V318M549.5 297V317M551.5 303V331M553.5 304V321M555.5 299V326M557.5 315V329M559.5 327V355M561.5 338V357M563.5 338V355M565.5 342V366M567.5 360V391M569.5 363V392M571.5 383V401M573.5 376V397M575.5 369V396M577.5 348V380M579.5 343V365M581.5 349V387M583.5 354V392M585.5 358V391M587.5 348V398M589.5 365V401M591.5 377V400M593.5 377V428M595.5 407V437M597.5 410V437M599.5 403V421M601.5 397V416M603.5 390V414M605.5 378V400M607.5 361V384M609.5 354V382M611.5 366V384M613.5 378V408M615.5 396V422M617.5 406V419M619.5 408V425M621.5 403V417M623.5 403V418M625.5 409V422M627.5 410V422M629.5 412V429M631.5 421V443M633.5 434V461M635.5 437V451M637.5 443V455M639.5 450V456M641.5 452V470M643.5 460V487M645.5 467V486M647.5 461V480M649.5 465V475M651.5 449V470M653.5 447V463M655.5 446V454M657.5 447V461M659.5 414V450M661.5 421V446M663.5 427V442M665.5 421V458M667.5 453V474M669.5 446V488M671.5 459V491M673.5 451V465M675.5 446V486M677.5 442V474M679.5 432V456M681.5 433V455M683.5 440V454M685.5 421V446M687.5 431V450M689.5 418V441M691.5 430V447M693.5 435V446M695.5 437V445M697.5 435V446M699.5 433V446M701.5 436V456M703.5 443V457M705.5 429V447M707.5 431V458M709.5 436V459M711.5 445V457M713.5 450V462M715.5 457V484M717.5 460V481M719.5 465V482M721.5 461V475M723.5 450V475M725.5 450V488M727.5 484V516M729.5 510V526M731.5 499V521M733.5 502V524M735.5 504V529M737.5 521V541M739.5 502V527M741.5 505V525M743.5 504V523M745.5 506V527M747.5 492V510M749.5 488V511M751.5 498V513M753.5 507V520M755.5 510V538M757.5 527V541M759.5 529V547M761.5 535V559M763.5 546V569M765.5 542V563M767.5 554V576M769.5 557V598M771.5 565V585M773.5 549V631M775.5 533V632M777.5 502V551M779.5 490V522M781.5 487V517M783.5 465V503M785.5 472V498M787.5 475V507M789.5 470V518M791.5 499V540M793.5 529V561M795.5 547V573M797.5 540V561M799.5 512V550M801.5 505V531M803.5 520V540M805.5 507V541M807.5 516V540M809.5 522V535M811.5 521V533M813.5 520V531M815.5 522V531M817.5 523V535M819.5 522V535M821.5 522V534M823.5 519V528M825.5 505V524M827.5 505V519M829.5 508V520M831.5 503V514M833.5 506V516M835.5 509V522M837.5 508V530M839.5 492V524M841.5 500V523M843.5 498V512M845.5 503V522M847.5 508V523M849.5 516V525M851.5 515V527M853.5 508V520M855.5 514V524M857.5 516V528M859.5 525V559M861.5 553V575M863.5 554V571M865.5 564V600M867.5 572V596M869.5 555V582M871.5 546V565M873.5 553V584M875.5 571V586M877.5 563V590M879.5 566V584M881.5 571V584M883.5 570V584M885.5 557V574M887.5 555V564M889.5 555V569M891.5 557V568M893.5 555V564M895.5 546V558M897.5 549V572M899.5 565V578M901.5 566V600M903.5 570V588M905.5 573V590M907.5 586V599M909.5 592V619M911.5 586V610M913.5 579V594M915.5 573V599M917.5 566V597M919.5 584V603M921.5 586V610M923.5 578V603M925.5 578V593M927.5 584V604M929.5 584V604M931.5 589V605M933.5 592V602M935.5 591V601M937.5 581V600M939.5 575V585M941.5 536V580M943.5 544V561M945.5 527V554M947.5 496V536M949.5 498V516M951.5 484V499M953.5 493V522M955.5 493V528M957.5 484V524M959.5 516V541M961.5 492V531M963.5 490V526M965.5 509V540M967.5 515V545M969.5 518V544M971.5 535V576M973.5 553V585M975.5 548V579M977.5 505V550M979.5 502V528M981.5 480V517M983.5 454V489M985.5 454V485M987.5 475V488M989.5 484V502M991.5 458V492M993.5 446V464M995.5 439V466M997.5 439V460M999.5 448V470M1001.5 418V467M1003.5 392V430M1005.5 407V434M1007.5 408V420M1009.5 401V418M1011.5 406V438M1013.5 414V434M1015.5 406V430M1017.5 379V410M1019.5 379V406M1021.5 386V413M1023.5 404V416M1025.5 399V409M1027.5 409V439M1029.5 418V452M1031.5 409V441M1033.5 417V440M1035.5 421V439M1037.5 415V438M1039.5 409V420M1041.5 412V426M1043.5 419V428M1045.5 414V428M1047.5 417V428M1049.5 405V420M1051.5 374V410M1053.5 350V387M1055.5 358V388M1057.5 354V380M1059.5 349V376M1061.5 373V408M1063.5 386V414M1065.5 394V423M1067.5 410V426M1069.5 410V428M1071.5 390V415M1073.5 387V403M1075.5 388V398M1077.5 390V426M1079.5 403V418M1081.5 411V451M1083.5 426V447M1085.5 416V434M1087.5 418V443M1089.5 427V444M1091.5 428V441M1093.5 420V438M1095.5 420V436M1097.5 427V435M1099.5 423V434M1101.5 429V446M1103.5 434V444M1105.5 440V469M1107.5 436V462M1109.5 434V463M1111.5 458V483M1113.5 468V485M1115.5 468V493M1117.5 480V495M1119.5 483V508M1121.5 499V515M1123.5 496V513M1125.5 489V501M1127.5 486V512M1129.5 505V521M1131.5 491V511M1133.5 494V512M1135.5 505V514M1137.5 506V522M1139.5 503V530M1141.5 519V568M1143.5 524V554M1145.5 509V534M1147.5 512V532M1149.5 508V538M1151.5 507V532M1153.5 518V580M1155.5 546V585M1157.5 533V568M1159.5 530V552M1161.5 509V557M1163.5 492V528M1165.5 454V500M1167.5 440V470M1169.5 419V456M1171.5 386V427M1173.5 400V443M1175.5 386V429M1177.5 390V422M1179.5 406V423M1181.5 386V414M1183.5 387V401M1185.5 393V417M1187.5 396V424M1189.5 398V414M1191.5 383V412M1193.5 374V391M1195.5 382V410M1197.5 383V406M1199.5 390V406M1201.5 397V409M1203.5 396V417M1205.5 397V410M1207.5 397V409M1209.5 406V427M1211.5 419V436M1213.5 433V455M1215.5 452V464M1217.5 449V479M1219.5 458V495M1221.5 479V517M1223.5 483V499M1225.5 478V495M1227.5 477V494M1229.5 459V490M1231.5 436V463M1233.5 428V448M1235.5 412V438M1237.5 416V443M1239.5 428V444M1241.5 437V459M1243.5 432V460M1245.5 422V448M1247.5 421V442M1249.5 415V433M1251.5 428V464M1253.5 445V465M1255.5 440V463M1257.5 454V478M1259.5 454V488M1261.5 480V500M1263.5 473V488M1265.5 470V488M1267.5 481V496M1269.5 476V486M1271.5 470V482M1273.5 475V482M1275.5 470V485M1277.5 470V487M1279.5 474V490M1281.5 474V484M1283.5 471V480M1285.5 456V475M1287.5 456V470M1289.5 458V469M1291.5 460V474M1293.5 454V469M1295.5 443V465M1297.5 437V456M1299.5 437V454M1301.5 432V448M1303.5 432V457M1305.5 447V467M1307.5 446V467M1309.5 431V457M1311.5 424V439M1313.5 400V430M1315.5 396V414M1317.5 405V422M1319.5 404V423M1321.5 405V421M1323.5 397V412M1325.5 400V409M1327.5 405V417M1329.5 407V424M1331.5 405V432M1333.5 399V421M1335.5 409V426M1337.5 412V430M1339.5 410V423M1341.5 375V421M1343.5 364V382M1345.5 345V372M1347.5 343V374M1349.5 343V379M1351.5 353V385M1353.5 376V395M1355.5 323V384M1357.5 321V347M1359.5 323V351M1361.5 338V356M1363.5 330V372M1365.5 348V376M1367.5 360V396M1369.5 362V383M1371.5 359V432M1373.5 416V443M1375.5 405V432M1377.5 409V426M1379.5 398V423M1381.5 412V430M1383.5 393V423M1385.5 391V415M1387.5 384V398M1389.5 373V388M1391.5 364V385M1393.5 365V382M1395.5 361V381M1397.5 363V374M1399.5 364V388M1401.5 378V391M1403.5 375V392M1405.5 384V396M1407.5 389V396M1409.5 394V406M1411.5 394V419M1413.5 391V428M1415.5 395V416M1417.5 392V408M1419.5 394V408M1421.5 394V412M1423.5 387V403M1425.5 390V403M1427.5 397V404M1429.5 382V403M1431.5 365V386M1433.5 367V386M1435.5 368V379M1437.5 341V382M1439.5 347V374M1441.5 357V376M1443.5 367V404M1445.5 382V402M1447.5 362V389M1449.5 354V380M1451.5 346V363M1453.5 346V364M1455.5 356V368M1457.5 350V363M1459.5 354V368M1461.5 355V384M1463.5 367V391M1465.5 372V387M1467.5 374V385M1469.5 363V383M1471.5 363V374M1473.5 354V374M1475.5 344V361M1477.5 344V370M1479.5 360V372M1481.5 367V377M1483.5 365V376M1485.5 356V371M1487.5 342V369M1489.5 345V374M1491.5 313V369M1493.5 318V362M1495.5 334V356M1497.5 333V359M1499.5 346V363M1501.5 354V379M1503.5 372V385M1505.5 285V375M1507.5 303V337M1509.5 318V348M1511.5 325V344M1513.5 295V332M1515.5 288V308M1517.5 299V312M1519.5 273V300M1521.5 283V297M1523.5 264V306M1525.5 244V271M1527.5 218V247M1529.5 222V250M1531.5 221V247M1533.5 204V226M1535.5 162V219M1537.5 145V186M1539.5 141V151" stroke="#00ff00" stroke-width="1" fill="none"/>
<path d="M262.5 107V752M262 107.5H1546M1545.5 107V752M262 751.5H1546M1546 111.5H1549M1546 145.5H1549M1546 178.5H1549M1546 212.5H1549M1546 245.5H1549M1546 279.5H1549M1546 312.5H1549M1546 346.5H1549M1546 379.5H1549M1546 413.5H1549M1546 446.5H1549M1546 480.5H1549M1546 513.5H1549M1546 547.5H1549M1546 580.5H1549M1546 614.5H1549M1546 647.5H1549M1546 681.5H1549M1546 714.5H1549M1546 748.5H1549M263.5 752V755M327.5 752V755M391.5 752V755M455.5 752V755M519.5 752V755M583.5 752V755M647.5 752V755M711.5 752V755M775.5 752V755M839.5 752V755M903.5 752V755M967.5 752V755M1031.5 752V755M1095.5 752V755M1159.5 752V755M1223.5 752V755M1287.5 752V755M1351.5 752V755M1415.5 752V755M1479.5 752V755" stroke="#fff" stroke-width="1" fill="none"/>
<g font-family="Liberation Sans, sans-serif" font-size="9.7" fill="#fff" shape-rendering="auto">
<text x="1552" y="114.8" textLength="32.3" lengthAdjust="spacingAndGlyphs">108.015</text>
<text x="1552" y="181.8" textLength="32.3" lengthAdjust="spacingAndGlyphs">107.850</text>
<text x="1552" y="215.8" textLength="32.3" lengthAdjust="spacingAndGlyphs">107.765</text>
<text x="1552" y="248.8" textLength="32.3" lengthAdjust="spacingAndGlyphs">107.685</text>
<text x="1552" y="282.8" textLength="32.3" lengthAdjust="spacingAndGlyphs">107.600</text>
<text x="1552" y="315.8" textLength="32.3" lengthAdjust="spacingAndGlyphs">107.520</text>
<text x="1552" y="349.8" textLength="32.3" lengthAdjust="spacingAndGlyphs">107.435</text>
<text x="1552" y="382.8" textLength="32.3" lengthAdjust="spacingAndGlyphs">107.355</text>
<text x="1552" y="416.8" textLength="32.3" lengthAdjust="spacingAndGlyphs">107.270</text>
<text x="1552" y="449.8" textLength="32.3" lengthAdjust="spacingAndGlyphs">107.190</text>
<text x="1552" y="483.8" textLength="32.3" lengthAdjust="spacingAndGlyphs">107.105</text>
<text x="1552" y="516.8" textLength="32.3" lengthAdjust="spacingAndGlyphs">107.025</text>
<text x="1552" y="550.8" textLength="32.3" lengthAdjust="spacingAndGlyphs">106.940</text>
<text x="1552" y="583.8" textLength="32.3" lengthAdjust="spacingAndGlyphs">106.860</text>
<text x="1552" y="617.8" textLength="32.3" lengthAdjust="spacingAndGlyphs">106.775</text>
<text x="1552" y="650.8" textLength="32.3" lengthAdjust="spacingAndGlyphs">106.695</text>
<text x="1552" y="684.8" textLength="32.3" lengthAdjust="spacingAndGlyphs">106.610</text>
<text x="1552" y="717.8" textLength="32.3" lengthAdjust="spacingAndGlyphs">106.530</text>
<text x="1552" y="751.8" textLength="32.3" lengthAdjust="spacingAndGlyphs">106.445</text>
<rect x="1547" y="143" width="41" height="11" fill="#fff" shape-rendering="crispEdges"/>
<text x="1552" y="151.800" fill="#000" textLength="32.3" lengthAdjust="spacingAndGlyphs">107.924</text>
<text x="262" y="763.500">11 May 2020</text>
<text x="326" y="763.500">11 May 08:15</text>
<text x="390" y="763.500">11 May 16:15</text>
<text x="454" y="763.500">12 May 00:15</text>
<text x="518" y="763.500">12 May 08:15</text>
<text x="582" y="763.500">12 May 16:15</text>
<text x="646" y="763.500">13 May 00:15</text>
<text x="710" y="763.500">13 May 08:15</text>
<text x="774" y="763.500">13 May 16:15</text>
<text x="838" y="763.500">14 May 00:15</text>
<text x="902" y="763.500">14 May 08:15</text>
<text x="966" y="763.500">14 May 16:15</text>
<text x="1030" y="763.500">15 May 00:15</text>
<text x="1094" y="763.500">15 May 08:15</text>
<text x="1158" y="763.500">15 May 16:15</text>
<text x="1222" y="763.500">18 May 00:15</text>
<text x="1286" y="763.500">18 May 08:15</text>
<text x="1350" y="763.500">18 May 16:15</text>
<text x="1414" y="763.500">19 May 00:15</text>
<text x="1478" y="763.500">19 May 08:15</text>
<path d="M266 114h7l-3.500 4z" fill="#fff"/>
<text x="278" y="118.500" xml:space="preserve">USDJPY,M15  107.926 107.941 107.915 107.924</text>
</g>
</svg>
<div style="left:0px;top:772px;width:1589px;height:1px;background:#fff"></div>
<div style="left:0px;top:777px;width:1589px;height:1px;background:#a0a0a0"></div>
<div style="left:0px;top:778px;width:15px;height:127px;background:#f0f0f0"></div>
<svg style="left:3px;top:779px" width="8" height="8" viewBox="0 0 8 8" ><path d="M1 1.800l5.500 4.400M6.500 1.800l-5.500 4.400" stroke="#000" stroke-width="1.700" fill="none"/></svg>
<div style="left:1px;top:791px;width:13px;height:115px;background:linear-gradient(to bottom,#dbe5f1 0,#c9d7e8 50%,#b4c6de 100%)"></div>
<span class="t" style="left:-4px;top:884px;width:24px;height:16px;line-height:16px;font-size:12px;transform:rotate(-90deg);transform-origin:center center">终端</span>
<div style="left:15px;top:778px;width:1574px;height:103px;background:#fff;border-left:1px solid #a0a0a0"></div>
<span class="t " style="left:22px;top:783px;font-size:12px">订单</span>
<span class="t " style="left:57px;top:783px;font-size:8px;color:#555">/</span>
<span class="t r " style="right:1207px;top:783px;font-size:12px">时间</span>
<span class="t r " style="right:1099px;top:783px;font-size:12px">类型</span>
<span class="t r " style="right:1015px;top:783px;font-size:12px">手数</span>
<span class="t r " style="right:907px;top:783px;font-size:12px">交易品种</span>
<span class="t r " style="right:787px;top:783px;font-size:12px">价格</span>
<span class="t r " style="right:667px;top:783px;font-size:12px">止损</span>
<span class="t r " style="right:547px;top:783px;font-size:12px">止盈</span>
<span class="t r " style="right:427px;top:783px;font-size:12px">价格</span>
<span class="t r " style="right:307px;top:783px;font-size:12px">手续费</span>
<span class="t r " style="right:187px;top:783px;font-size:12px">库存费</span>
<span class="t r " style="right:6px;top:783px;font-size:12px">获利</span>
<div style="left:171px;top:778px;width:1px;height:24px;background:#e5e5e5"></div>
<div style="left:387px;top:778px;width:1px;height:24px;background:#e5e5e5"></div>
<div style="left:495px;top:778px;width:1px;height:24px;background:#e5e5e5"></div>
<div style="left:579px;top:778px;width:1px;height:24px;background:#e5e5e5"></div>
<div style="left:687px;top:778px;width:1px;height:24px;background:#e5e5e5"></div>
<div style="left:807px;top:778px;width:1px;height:24px;background:#e5e5e5"></div>
<div style="left:927px;top:778px;width:1px;height:24px;background:#e5e5e5"></div>
<div style="left:1047px;top:778px;width:1px;height:24px;background:#e5e5e5"></div>
<div style="left:1167px;top:778px;width:1px;height:24px;background:#e5e5e5"></div>
<div style="left:1287px;top:778px;width:1px;height:24px;background:#e5e5e5"></div>
<div style="left:1407px;top:778px;width:1px;height:24px;background:#e5e5e5"></div>
<div style="left:16px;top:803px;width:1573px;height:20px;background:#c8c8c8"></div>
<svg style="left:22px;top:809px" width="9" height="9" viewBox="0 0 9 9" ><circle cx="4.5" cy="4.5" r="3.5" fill="#d8d8d8" stroke="#8a8a8a" stroke-width="1"/><path d="M3 6l3-3" stroke="#8a8a8a" stroke-width="1"/></svg>
<span class="t " style="left:38px;top:805px;font-size:12.3px;font-weight:bold">余额: 0.00 USD  净值: 0.00  可用预付款: 0.00</span>
<span class="t r " style="right:4px;top:805px;font-size:12.3px;font-weight:bold">0.00</span>
<div style="left:15px;top:881px;width:1574px;height:25px;background:#f0f0f0"></div>
<div style="left:61px;top:881px;width:1528px;height:1px;background:#000"></div>
<div style="left:16px;top:881px;width:2px;height:1px;background:#000"></div>
<div style="left:17px;top:881px;width:45px;height:22px;background:#fff;border:1px solid #000;border-top:none;box-shadow:1px 1px 0 #a0a0a0"></div>
<span class="t " style="left:28px;top:884px;font-size:12px">交易</span>
<span class="t tabtxt" style="left:72px;top:884px;font-size:12px">展示</span>
<div style="left:106px;top:884px;width:1px;height:17px;background:#606060"></div>
<span class="t tabtxt" style="left:116px;top:884px;font-size:12px">账户历史</span>
<div style="left:174px;top:884px;width:1px;height:17px;background:#606060"></div>
<span class="t tabtxt" style="left:184px;top:884px;font-size:12px">新闻</span>
<div style="left:218px;top:884px;width:1px;height:17px;background:#606060"></div>
<span class="t tabtxt" style="left:228px;top:884px;font-size:12px">警报</span>
<div style="left:262px;top:884px;width:1px;height:17px;background:#606060"></div>
<span class="t tabtxt" style="left:272px;top:884px;font-size:12px">邮箱</span>
<div style="left:314px;top:884px;width:1px;height:17px;background:#606060"></div>
<span class="t tabtxt" style="left:324px;top:884px;font-size:12px">市场</span>
<div style="left:378px;top:884px;width:1px;height:17px;background:#606060"></div>
<span class="t tabtxt" style="left:388px;top:884px;font-size:12px">信号</span>
<div style="left:422px;top:884px;width:1px;height:17px;background:#606060"></div>
<span class="t tabtxt" style="left:432px;top:884px;font-size:12px">文章</span>
<div style="left:474px;top:884px;width:1px;height:17px;background:#606060"></div>
<span class="t tabtxt" style="left:484px;top:884px;font-size:12px">代码库</span>
<div style="left:530px;top:884px;width:1px;height:17px;background:#606060"></div>
<span class="t tabtxt" style="left:540px;top:884px;font-size:12px">EA</span>
<div style="left:565px;top:884px;width:1px;height:17px;background:#606060"></div>
<span class="t tabtxt" style="left:575px;top:884px;font-size:12px">日志</span>
<div style="left:609px;top:884px;width:1px;height:17px;background:#606060"></div>
<span class="t " style="left:297px;top:889px;font-size:9.5px;letter-spacing:.6px;font-weight:bold;color:#e8281e">6</span>
<span class="t " style="left:349px;top:889px;font-size:9.5px;letter-spacing:.6px;font-weight:bold;color:#e8281e">122</span>
<span class="t " style="left:457px;top:889px;font-size:9.5px;letter-spacing:.6px;font-weight:bold;color:#e8281e">1</span>
<div style="left:0px;top:905px;width:1589px;height:1px;background:#fff"></div>
<div style="left:0px;top:906px;width:1589px;height:2px;background:#f4f4f4"></div>
<div style="left:0px;top:908px;width:1589px;height:1px;background:#a0a0a0"></div>
<div style="left:0px;top:909px;width:1589px;height:22px;background:#f0f0f0;border-top:1px solid #fff"></div>
<span class="t " style="left:2px;top:914px;font-size:12px">寻求帮助,请按F1键</span>
<span class="t " style="left:784px;top:914px;font-size:12.5px">Default</span>
<div style="left:778px;top:912px;width:1px;height:19px;background:#a0a0a0"></div>
<div style="left:913px;top:912px;width:1px;height:19px;background:#a0a0a0"></div>
<div style="left:1030px;top:912px;width:1px;height:19px;background:#a0a0a0"></div>
<div style="left:1112px;top:912px;width:1px;height:19px;background:#a0a0a0"></div>
<div style="left:1193px;top:912px;width:1px;height:19px;background:#a0a0a0"></div>
<div style="left:1272px;top:912px;width:1px;height:19px;background:#a0a0a0"></div>
<div style="left:1351px;top:912px;width:1px;height:19px;background:#a0a0a0"></div>
<div style="left:1429px;top:912px;width:1px;height:19px;background:#a0a0a0"></div>
<svg style="left:1435px;top:915px" width="24" height="13" viewBox="0 0 24 13" ><rect x="0.0" y="11.0" width="1.6" height="2.0" fill="#0c4a5c"/><rect x="0.0" y="0" width="1.6" height="9.8" fill="#3a6e1e"/><rect x="2.6" y="9.9" width="1.6" height="3.1" fill="#0c4a5c"/><rect x="2.6" y="0" width="1.6" height="8.7" fill="#3a6e1e"/><rect x="5.2" y="8.8" width="1.6" height="4.2" fill="#0c4a5c"/><rect x="5.2" y="0" width="1.6" height="7.6" fill="#3a6e1e"/><rect x="7.8" y="7.7" width="1.6" height="5.3" fill="#0c4a5c"/><rect x="7.8" y="0" width="1.6" height="6.5" fill="#3a6e1e"/><rect x="10.4" y="6.6" width="1.6" height="6.4" fill="#0c4a5c"/><rect x="10.4" y="0" width="1.6" height="5.4" fill="#3a6e1e"/><rect x="13.0" y="5.5" width="1.6" height="7.5" fill="#0c4a5c"/><rect x="13.0" y="0" width="1.6" height="4.3" fill="#3a6e1e"/><rect x="15.6" y="4.4" width="1.6" height="8.6" fill="#0c4a5c"/><rect x="15.6" y="0" width="1.6" height="3.2" fill="#3a6e1e"/><rect x="18.2" y="3.3" width="1.6" height="9.7" fill="#0c4a5c"/><rect x="18.2" y="0" width="1.6" height="2.1" fill="#3a6e1e"/><rect x="20.8" y="2.2" width="1.6" height="10.8" fill="#0c4a5c"/><rect x="20.8" y="0" width="1.6" height="1.0" fill="#3a6e1e"/></svg>
<span class="t " style="left:1462px;top:914px;font-size:12.5px;letter-spacing:.3px">4500/13 kb</span>
<svg style="left:1577px;top:919px" width="12" height="12" viewBox="0 0 12 12" ><path d="M11 1L1 11M11 5L5 11M11 9L9 11" stroke="#a0a0a0" stroke-width="1"/></svg>
</div>
</body></html>
